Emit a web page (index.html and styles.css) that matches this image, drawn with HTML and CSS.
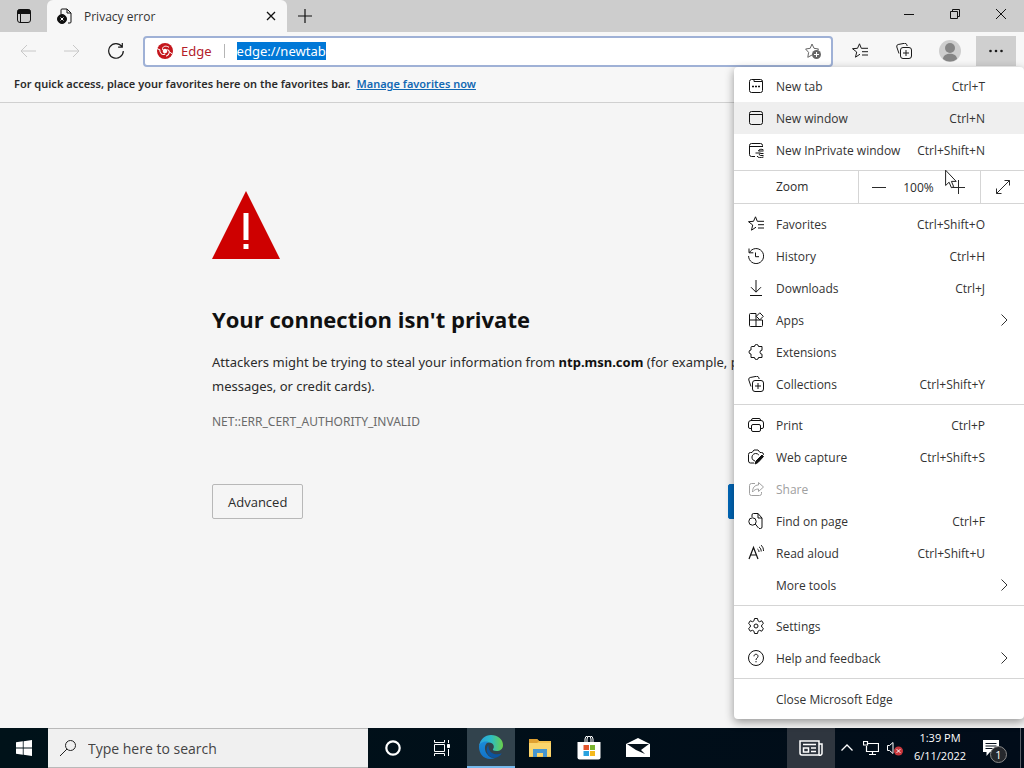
FILE: index.html
```html
<!DOCTYPE html>
<html lang="en">
<head>
    <meta charset="UTF-8">
    <meta name="viewport" content="width=device-width, initial-scale=1.0">
    <title>Privacy error</title>
    <link rel="stylesheet" href="styles.css">
</head>
<body>

    <header class="tab-strip">
        <button class="tab-actions" aria-label="Tab actions">
            <svg class="icon" viewBox="0 0 16 16"><rect x="1.5" y="1.5" width="13" height="13" rx="2.5"/><path class="fill" d="M2 2h12v3.5H2z"/><path d="M4.5 5v9"/></svg>
        </button>
        <div class="tab">
            <svg class="icon" viewBox="0 0 16 16"><path d="M4 6V2a1 1 0 0 1 1-1h5l4 4v9a1 1 0 0 1-1 1h-2M10 1v4h4"/><circle class="fill" cx="5" cy="11" r="4.5"/><path stroke="#fff" d="M3.500 9.500l3 3M6.500 9.500l-3 3"/></svg>
            <span class="tab-title">Privacy error</span>
            <button aria-label="Close tab">
                <svg class="icon" viewBox="0 0 16 16"><path d="M4 4l8 8M12 4l-8 8" stroke-width="1.3"/></svg>
            </button>
        </div>
        <button class="new-tab" aria-label="Open new tab">
            <svg class="icon" viewBox="0 0 16 16"><path d="M8 1v14M1 8h14" stroke-width="1.2"/></svg>
        </button>
        <div class="window-controls">
            <button aria-label="Minimize"><svg viewBox="0 0 10 10"><path d="M0 5.500h10"/></svg></button>
            <button aria-label="Restore"><svg viewBox="0 0 10 10"><path d="M.5 2.500h7v7h-7zM2.500 2.500v-2h7v7h-2"/></svg></button>
            <button aria-label="Close"><svg viewBox="0 0 10 10"><path d="M0 0l10 10M10 0L0 10"/></svg></button>
        </div>
    </header>

    <div class="toolbar">
        <button aria-label="Back" disabled><svg class="icon" viewBox="0 0 16 16"><path d="M16 8H1M7 2L1 8l6 6"/></svg></button>
        <button aria-label="Forward" disabled><svg class="icon" viewBox="0 0 16 16"><path d="M0 8h15M9 2l6 6-6 6"/></svg></button>
        <button aria-label="Refresh"><svg class="icon" viewBox="0 0 16 16"><path d="M13.800 3.500A7.300 7.300 0 1 0 15.300 8M14.300 0v4.200h-4.200" stroke-width="1.2"/></svg></button>
        <div class="address-bar">
            <svg class="icon brand" viewBox="0 0 16 16">
                <circle cx="8" cy="8" r="8"/>
                <path d="M5.500 6.800C5 3.500 8.500 2 12 4.300"/>
                <path d="M5.500 6.800C5 3.500 8.500 2 12 4.300" transform="rotate(120 8 8)"/>
                <path d="M5.500 6.800C5 3.500 8.500 2 12 4.300" transform="rotate(240 8 8)"/>
                <path d="M0 5.500L3 7M15.500 11l-3-2"/>
                <circle class="hole" cx="8" cy="8" r="2.300"/>
            </svg>
            <label for="address">Edge</label>
            <input id="address" type="text" value="edge://newtab" spellcheck="false" autofocus>
            <button aria-label="Add to favorites">
                <svg class="icon star" viewBox="0 0 16 16"><path d="M7 12l-4.200 2.300.8-4.900L.6 6l4.600-.7L7 1l2 4.300 4.600.7-1.200 1.300"/><circle cx="11.500" cy="11.500" r="4.500"/><path stroke="#fff" d="M9 11.500h5M11.500 9v5"/></svg>
            </button>
        </div>
        <button aria-label="Favorites"><svg class="icon" viewBox="0 0 16 16"><path d="M8 11.200l-4.500 3 1.200-5.200L.5 5.700l5-.4L7.500.8l1.800 4.500H16M10 8.700h6M10 12h6"/></svg></button>
        <button aria-label="Collections"><svg class="icon" viewBox="0 0 16 16"><path d="M3 10.500L.8 4a2 2 0 0 1 1.400-2.500L8.500.3a2 2 0 0 1 2.300 1.500l.4 1.200"/><rect x="4.500" y="4.500" width="11" height="11" rx="2.500"/><path d="M10 7v6M7 10h6"/></svg></button>
        <button class="profile" aria-label="Profile"><svg viewBox="0 0 22 22"><circle cx="11" cy="11" r="11" fill="#cecece"/><circle cx="11" cy="8" r="5" fill="#858585"/><path d="M4 19c0-7 14-7 14 0a11 11 0 0 1-14 0z" fill="#858585"/></svg></button>
        <button class="more" aria-label="Settings and more" aria-expanded="true"><svg class="icon dots" viewBox="0 0 16 16"><circle cx="2.500" cy="8" r="1.300"/><circle cx="8" cy="8" r="1.300"/><circle cx="13.500" cy="8" r="1.300"/></svg></button>
    </div>

    <div class="favorites-bar">
        <span>For quick access, place your favorites here on the favorites bar.</span>
        <a href="#">Manage favorites now</a>
    </div>

    <main class="page">
        <div class="interstitial">
            <svg class="warning" viewBox="0 0 68 68"><path d="M34 0l34 68H0z" fill="#ce0000"/><path d="M31.500 22h5v27h-5zM31.500 53h5v5h-5z" fill="#fff"/></svg>
            <h1>Your connection isn't private</h1>
            <p>Attackers might be trying to steal your information from <strong>ntp.msn.com</strong> (for example, passwords, messages, or credit cards).</p>
            <div class="error-code">NET::ERR_CERT_AUTHORITY_INVALID</div>
            <div class="actions">
                <button>Advanced</button>
                <button class="primary">Go back</button>
            </div>
        </div>
    </main>

    <footer class="taskbar">
        <button class="start" aria-label="Start"><svg class="icon" viewBox="0 0 16 16"><path d="M0 2.300L6.800 1.300v6.300H0zM7.600 1.200L16 0v7.600H7.600zM0 8.400h6.800v6.300L0 13.700zM7.600 8.400H16V16l-8.400-1.200z" fill="#fff" stroke="none"/></svg></button>
        <div class="search">
            <svg class="icon" viewBox="0 0 16 16"><circle cx="10.500" cy="5.500" r="5"/><path d="M7 9L0 16"/></svg>
            <input type="text" aria-label="Search" placeholder="Type here to search">
        </div>
        <nav class="apps">
            <button aria-label="Cortana"><svg class="icon" viewBox="0 0 16 16"><circle cx="8" cy="8" r="6.700" stroke-width="2.200"/></svg></button>
            <button aria-label="Task View"><svg class="icon" viewBox="0 0 16 16"><path d="M.5 0v2.500h10V0M.5 16v-2.500h10V16M.5 4.500h10v7H.5zM14.500 0v3M14.500 9v7"/><path class="fill" d="M13.500 4.500h2v3h-2z"/></svg></button>
            <button class="active" aria-label="Microsoft Edge">
                <svg class="app-icon" viewBox="0 0 24 24">
                    <defs>
                        <linearGradient id="edge-top" x1="0" y1="0" x2="1" y2="0"><stop offset="0" stop-color="#2a9fe0"/><stop offset=".5" stop-color="#2cbcc5"/><stop offset="1" stop-color="#6ad04a"/></linearGradient>
                        <linearGradient id="edge-body" x1="0" y1="0" x2="0" y2="1"><stop offset="0" stop-color="#1b8bd8"/><stop offset="1" stop-color="#1272c8"/></linearGradient>
                    </defs>
                    <path d="M0 11C1 4.500 6 0 12 0c7 0 12 4.500 12 10 0 4-3 6-6.500 6-3 0-4-1-3.500-2 2-2 .5-6.500-4-6.500C5.500 7.500 1.500 9 0 11z" fill="url(#edge-top)"/>
                    <path d="M0 12c0-4 5-6.500 9.500-5C5 9 5 15 8 19c2 3 5 4.500 8 4C7 26.500 0 20 0 12z" fill="url(#edge-body)"/>
                    <path d="M9.500 10c-4 4-1.500 12.500 6.500 13 3-.6 5.500-2.500 6.700-4.800-6 3-14-.2-13.200-8.200z" fill="#0c549f"/>
                </svg>
            </button>
            <button aria-label="File Explorer"><svg class="app-icon" viewBox="0 0 24 24"><path d="M1 3h8l2 2h12v16H1z" fill="#f5c14d"/><path d="M1 3h8l2 2-2 2H1z" fill="#e0a030"/><path d="M1 7h22v13H1z" fill="#fbd56d"/><path d="M5 13h14v8h-4v-4H9v4H5z" fill="#4796d0"/></svg></button>
            <button aria-label="Microsoft Store"><svg class="app-icon" viewBox="0 0 24 24"><path d="M8 6V3a3 3 0 0 1 6 0v3M10 6V3a3 3 0 0 1 6 0v3" fill="none" stroke="#fff"/><path d="M.5 6h23v15.500a2 2 0 0 1-2 2h-19a2 2 0 0 1-2-2z" fill="#fff"/><path d="M6.500 9H12v5H6.500z" fill="#e3542b"/><path d="M13 9h5v5h-5z" fill="#7bb42f"/><path d="M6.500 15H12v5H6.500z" fill="#29a2df"/><path d="M13 15h5v5h-5z" fill="#f5b91d"/></svg></button>
            <button aria-label="Mail"><svg class="app-icon" viewBox="0 0 24 24"><path d="M0 8l12-6 12 6v13H0z" fill="#fff"/><path d="M1 8h22l-8 6 4 4-9-4z" fill="#06121c"/></svg></button>
        </nav>
        <div class="tray">
            <button class="news" aria-label="News"><svg viewBox="0 0 24 16"><path d="M1 1h19v14H3a2 2 0 0 1-2-2zM20 4h3v9a2 2 0 0 1-3 2M4 4.500h13M12 8h5M12 11.500h5M4.500 8h5v4h-5z" stroke-width="1.500"/></svg></button>
            <button aria-label="Show hidden icons"><svg class="icon" viewBox="0 0 16 16"><path d="M2.500 10.500L8 5l5.500 5.500" stroke-width="1.300"/></svg></button>
            <button aria-label="Network"><svg class="icon" viewBox="0 0 16 16"><path d="M4 3.500h11.500v8H3.500V6M.5 1.500h4V5h-4zM9.500 11.500v3M6 14.500h7" stroke-width="1.200"/></svg></button>
            <button aria-label="Volume muted"><svg class="icon" viewBox="0 0 16 16"><path d="M.5 5.500h2l3.500-3v11l-3.500-3h-2z"/><circle cx="11.500" cy="11" r="4.500" fill="#c9373c" stroke="none"/><path d="M9.700 9.200l3.600 3.600M13.300 9.200l-3.600 3.600"/></svg></button>
            <button class="clock"><span>1:39 PM</span><span>6/11/2022</span></button>
            <button class="notifications" aria-label="Notifications">
                <svg viewBox="0 0 16 16"><path d="M0 0h16v12H7l-3.500 4v-4H0z" fill="#fff" stroke="none"/><path d="M2.500 3.500h11M2.500 6h11M2.500 8.500h7" stroke="#06101d"/></svg>
                <span class="badge">1</span>
            </button>
            <button class="show-desktop" aria-label="Show desktop"></button>
        </div>
    </footer>

    <nav class="menu">
        <button class="menu-item"><svg class="icon" viewBox="0 0 16 16"><rect x="1.500" y="1.500" width="13" height="13" rx="2"/><path d="M6 1.500v2h8.500"/><path d="M4 8.500h2M7 8.500h2M10 8.500h2" stroke-width="1.500"/></svg><span>New tab</span><kbd>Ctrl+T</kbd></button>
        <button class="menu-item hovered"><svg class="icon" viewBox="0 0 16 16"><rect x="1.500" y="1.500" width="13" height="13" rx="2"/><path d="M1.500 4.500h13"/></svg><span>New window</span><kbd>Ctrl+N</kbd></button>
        <button class="menu-item"><svg class="icon" viewBox="0 0 16 16"><path d="M7 14.500H3.500a2 2 0 0 1-2-2v-9a2 2 0 0 1 2-2h9a2 2 0 0 1 2 2V5M1.500 4.500h13M15.500 8c-2-1.500-5-.5-5 1h5M7.500 11h5M15.500 11.500h-3c-1.500 0-1.500 2 0 2h3M9 14c1 2 4 2 6.500 1"/></svg><span>New InPrivate window</span><kbd>Ctrl+Shift+N</kbd></button>
        <hr>
        <div class="zoom-row">
            <span class="zoom-label">Zoom</span>
            <div class="zoom-controls">
                <button aria-label="Zoom out"><svg class="icon" viewBox="0 0 16 16"><path d="M1 8.500h14"/></svg></button>
                <output>100%</output>
                <button aria-label="Zoom in"><svg class="icon" viewBox="0 0 16 16"><path d="M8.500 1v14M1 8.500h14"/></svg></button>
            </div>
            <button class="fullscreen" aria-label="Full screen"><svg class="icon" viewBox="0 0 16 16"><path d="M1.500 14.500l13-13M9.500 1.500h5v5M1.500 9.500v5h5"/></svg></button>
        </div>
        <hr class="tight">
        <button class="menu-item"><svg class="icon" viewBox="0 0 16 16"><path d="M8 11.200l-4.500 3 1.200-5.200L.5 5.700l5-.4L7.500.8l1.800 4.500H16M10 8.700h6M10 12h6"/></svg><span>Favorites</span><kbd>Ctrl+Shift+O</kbd></button>
        <button class="menu-item"><svg class="icon" viewBox="0 0 16 16"><path d="M1.500 4.500A7.500 7.500 0 1 1 .6 8M1 .5v4.300h4.300M7.500 4.500v4.200h3.500"/></svg><span>History</span><kbd>Ctrl+H</kbd></button>
        <button class="menu-item"><svg class="icon" viewBox="0 0 16 16"><path d="M8 0v12M3 7.200l5 5 5-5M2 15.500h12"/></svg><span>Downloads</span><kbd>Ctrl+J</kbd></button>
        <button class="menu-item"><svg class="icon" viewBox="0 0 16 16"><path d="M8 1.500H2.500a1 1 0 0 0-1 1v11a1 1 0 0 0 1 1h11a1 1 0 0 0 1-1V8M1.500 8h13M8 1.500v13M11.800.8L15.300 4.300l-3.500 3.500-3.500-3.500z"/></svg><span>Apps</span><span class="chevron"><svg viewBox="0 0 7 12"><path d="M.5.500L6 6l-5.500 5.500"/></svg></span></button>
        <button class="menu-item"><svg class="icon" viewBox="0 0 16 16"><path d="M4 2.500h2.500a2 2 0 0 1 4 0H14v3.700a2 2 0 0 0 0 4v3.300h-3.500a2 2 0 0 1-4 0H3V10a2 2 0 0 1 0-4V3.500a1 1 0 0 1 1-1z"/></svg><span>Extensions</span></button>
        <button class="menu-item"><svg class="icon" viewBox="0 0 16 16"><path d="M3 10.500L.8 4a2 2 0 0 1 1.400-2.500L8.500.3a2 2 0 0 1 2.300 1.500l.4 1.200"/><rect x="4.500" y="4.500" width="11" height="11" rx="2.500"/><path d="M10 7v6M7 10h6"/></svg><span>Collections</span><kbd>Ctrl+Shift+Y</kbd></button>
        <hr>
        <button class="menu-item"><svg class="icon" viewBox="0 0 16 16"><path d="M3.500 11.500H2a1.500 1.500 0 0 1-1.500-1.500V6A2.500 2.500 0 0 1 3 3.500h10A2.500 2.500 0 0 1 15.500 6v4a1.500 1.500 0 0 1-1.500 1.500h-1.500M3.500 3.500V3A1.500 1.500 0 0 1 5 1.500h6A1.500 1.500 0 0 1 12.500 3v.5"/><rect x="3.500" y="7.500" width="9" height="7" rx="1.500"/></svg><span>Print</span><kbd>Ctrl+P</kbd></button>
        <button class="menu-item"><svg class="icon" viewBox="0 0 16 16"><path d="M6 14H2.500a2 2 0 0 1-2-2V5.500a2 2 0 0 1 2-2H4L6 1h4l2 2.500h1.500a2 2 0 0 1 2 2V6M10.800 6A3.800 3.800 0 1 0 7 12"/><path class="fill" d="M14 6l1.500 1.500-5.500 6-3 1.500 1-3z"/></svg><span>Web capture</span><kbd>Ctrl+Shift+S</kbd></button>
        <button class="menu-item" disabled><svg class="icon" viewBox="0 0 16 16"><path d="M7 2.500H3.500a2 2 0 0 0-2 2v8a2 2 0 0 0 2 2h8a2 2 0 0 0 2-2V11M10.500 1.500l5 4.500-5 4.500V8C8 8 6 9 4.500 11c0-4 2-7 6-7z"/></svg><span>Share</span></button>
        <button class="menu-item"><svg class="icon" viewBox="0 0 16 16"><path d="M4 4V2a1.500 1.500 0 0 1 1.500-1.500H10L14 5v9a1.500 1.500 0 0 1-1.500 1.500H11M10 .5V5h4M7.300 11L10.500 15"/><circle cx="4.500" cy="8.500" r="3.700"/></svg><span>Find on page</span><kbd>Ctrl+F</kbd></button>
        <button class="menu-item"><svg class="icon" viewBox="0 0 16 16"><path d="M1 14L5.500 2.500 10 14M2.500 10h6" stroke-width="1.200"/><path d="M9.500 4c1 .7 1.500 1.500 1.500 3M11 1.800c1.500 1.200 2.200 2.700 2.200 4.700M12.800 0c2 1.500 2.700 3.500 2.700 6"/></svg><span>Read aloud</span><kbd>Ctrl+Shift+U</kbd></button>
        <button class="menu-item"><span class="icon"></span><span>More tools</span><span class="chevron"><svg viewBox="0 0 7 12"><path d="M.5.500L6 6l-5.500 5.500"/></svg></span></button>
        <hr>
        <button class="menu-item"><svg class="icon" viewBox="0 0 16 16"><path d="M6.500.5h3l.5 2.300 1.500.9 2.300-.9 1.600 2.700L13.700 7v2l1.700 1.500-1.600 2.700-2.300-.9-1.500.9-.5 2.300h-3L6 13.200l-1.500-.9-2.300.9-1.600-2.700L2.300 9V7L.6 5.500l1.600-2.700 2.300.9L6 2.800z" stroke-linejoin="round"/><circle cx="8" cy="8" r="2"/></svg><span>Settings</span></button>
        <button class="menu-item"><svg class="icon" viewBox="0 0 16 16"><circle cx="8" cy="8" r="7.500"/><path d="M6 6.300c0-2.800 4-2.600 4 0C10 8 8 8 8 10M8 11v1.300"/></svg><span>Help and feedback</span><span class="chevron"><svg viewBox="0 0 7 12"><path d="M.5.500L6 6l-5.500 5.500"/></svg></span></button>
        <hr>
        <button class="menu-item"><span class="icon"></span><span>Close Microsoft Edge</span></button>

        <svg class="cursor" viewBox="0 0 12 20"><path d="M.6 1.200v15.300l3.500-3.300 2.300 5.500 2.300-1-2.300-5.300h4.800z" fill="#fff" stroke="#222"/></svg>
    </nav>

    <script>
        document.getElementById('address').select();
    </script>

</body>
</html>
```

FILE: styles.css
```css
* {
    box-sizing: border-box;
}
body {
    font-family: 'Open Sans', 'Noto Sans', sans-serif;
    font-size: 12px;
    color: #2b2b2b;
    background-color: #f5f5f5;
    margin: 0;
    min-height: 100vh;
    display: flex;
    flex-direction: column;
    position: relative;
    overflow: hidden;
}
button, input {
    font: inherit;
    color: inherit;
    background: none;
    border: none;
    padding: 0;
    margin: 0;
}
button {
    display: flex;
    align-items: center;
    justify-content: center;
}
svg {
    fill: none;
    stroke: currentColor;
    display: block;
    flex-shrink: 0;
}
.icon {
    width: 16px;
    height: 16px;
}
.fill {
    fill: currentColor;
}

/* Tabs */
.tab-strip {
    display: flex;
    height: 32px;
    background-color: #cdcdcd;
    color: #111;
}
.tab-actions {
    width: 47px;
}
.tab {
    display: flex;
    align-items: center;
    width: 240px;
    padding: 0 8px 0 10px;
    background-color: #f7f7f7;
    border-radius: 6px 6px 0 0;
}
.tab-title {
    flex: 1;
    margin-left: 11px;
    color: #333;
}
.new-tab {
    width: 36px;
}
.window-controls {
    display: flex;
    margin-left: auto;
    height: 28px;
}
.window-controls button {
    width: 46px;
}
.window-controls svg {
    width: 10px;
    height: 10px;
}

/* Toolbar */
.toolbar {
    display: flex;
    align-items: center;
    gap: 4px;
    height: 36px;
    padding: 2px 8px 0;
    background-color: #f7f7f7;
}
.toolbar > button {
    width: 40px;
    height: 30px;
    color: #1a1a1a;
}
.toolbar > button:disabled {
    color: #c8c8c8;
}
.toolbar > .profile {
    width: 44px;
}
.profile svg {
    width: 22px;
    height: 22px;
    stroke: none;
}
.toolbar > .more {
    background-color: #cfcfcf;
}
.dots {
    fill: currentColor;
    stroke: none;
}
.address-bar {
    flex: 1;
    display: flex;
    align-items: center;
    height: 31px;
    margin: 0 3px;
    padding: 0 10px 0 12px;
    background-color: white;
    border: 2px solid #9fb1d6;
    border-radius: 4px;
    font-family: 'Noto Sans', 'Open Sans', sans-serif;
    font-size: 13px;
}
.address-bar label {
    color: #b3202a;
    margin-left: 8px;
    padding-right: 12px;
    line-height: 14px;
    border-right: 1px solid #b5b5b5;
}
.address-bar input {
    flex: 1;
    height: 22px;
    margin-left: 12px;
    outline: none;
}
.address-bar input::selection {
    background-color: #0078d7;
    color: white;
}
.brand {
    fill: #c4161c;
    stroke: white;
}
.brand circle {
    stroke: none;
}
.brand path {
    fill: none;
}
.brand .hole {
    fill: white;
}
.star {
    color: #666;
}
.star circle {
    fill: #666;
    stroke: none;
}

/* Favorites bar */
.favorites-bar {
    display: flex;
    align-items: center;
    gap: 6px;
    height: 35px;
    padding: 0 14px 3px;
    background-color: #f7f7f7;
    border-bottom: 1px solid #d0d0d0;
    font-family: 'Noto Sans', 'Open Sans', sans-serif;
    font-size: 11px;
    font-weight: 600;
}
.favorites-bar a {
    color: #1268b3;
}

/* Error page */
.page {
    flex: 1;
    padding-top: 88px;
}
.interstitial {
    max-width: 600px;
    margin: 0 auto;
}
.warning {
    width: 68px;
    height: 68px;
    stroke: none;
}
h1 {
    margin: 44px 0 15px;
    font-size: 22px;
    line-height: 32px;
    font-weight: bold;
    color: #101010;
}
p {
    margin: 0 0 14px;
    font-family: 'Noto Sans', 'Open Sans', sans-serif;
    font-size: 13px;
    line-height: 24px;
}
strong {
    color: #101010;
}
.error-code {
    font-family: 'Noto Sans', 'Open Sans', sans-serif;
    font-size: 12px;
    line-height: 20px;
    color: #6a6a6a;
}
.actions {
    display: flex;
    justify-content: space-between;
    margin-top: 52px;
}
.actions button {
    height: 35px;
    padding: 0 15px;
    border: 1px solid #b8b8b8;
    border-radius: 2px;
    font-size: 13px;
}
.actions .primary {
    min-width: 84px;
    background-color: #0067b8;
    border-color: #0067b8;
    color: white;
}

/* Menu */
.menu {
    position: absolute;
    top: 67px;
    right: 0;
    width: 290px;
    padding: 3px 0 4px;
    background-color: white;
    border-radius: 4px;
    box-shadow: 0 3px 10px rgba(0, 0, 0, 0.4);
}
.menu-item {
    width: 100%;
    height: 32px;
    padding: 0 39px 0 14px;
    justify-content: flex-start;
    gap: 12px;
    color: #333;
}
.menu-item .icon {
    color: #111;
}
.menu-item kbd {
    font: inherit;
    margin-left: auto;
}
.menu-item:disabled, .menu-item:disabled .icon {
    color: #a0a0a0;
}
.hovered {
    background-color: #efefef;
}
.chevron {
    margin-left: auto;
    margin-right: -23px;
}
.chevron svg {
    width: 7px;
    height: 12px;
}
.menu hr {
    margin: 4px 0;
    border: none;
    border-top: 1px solid #d5d5d5;
}
.zoom-row {
    display: flex;
    height: 32px;
    margin-top: -4px;
}
.zoom-label {
    flex: 1;
    padding-left: 42px;
    line-height: 32px;
}
.zoom-controls {
    display: flex;
    align-items: center;
    justify-content: space-between;
    width: 123px;
    padding: 0 14px 0 12px;
    border: 1px solid #d5d5d5;
    border-width: 0 1px;
}
.fullscreen {
    width: 43px;
}
.menu .tight {
    margin-top: 0;
}
.cursor {
    position: absolute;
    top: 102px;
    left: 211px;
    width: 12px;
    height: 20px;
}

/* Taskbar */
.taskbar {
    display: flex;
    height: 40px;
    background: linear-gradient(to right, #001219, #010c19);
    color: white;
}
.start {
    width: 48px;
}
.search {
    display: flex;
    align-items: center;
    width: 320px;
    padding: 0 12px;
    gap: 12px;
    background-color: #f0f0f0;
    border: 1px solid #b9b9b9;
    border-width: 1px 0;
    color: #222;
    font-size: 14px;
}
.search input {
    flex: 1;
    min-width: 0;
}
.search input::placeholder {
    color: #444;
}
.apps {
    display: flex;
    gap: 1px;
    padding-left: 1px;
}
.apps button {
    width: 48px;
}
.apps .active {
    background-color: #32434d;
    border-bottom: 2px solid #76b9ed;
}
.app-icon {
    width: 24px;
    height: 24px;
    stroke: none;
}
.tray {
    display: flex;
    margin-left: auto;
}
.tray button {
    width: 24px;
}
.tray .news {
    width: 48px;
    background-color: #2f363f;
}
.news svg {
    width: 24px;
    height: 16px;
}
.tray .clock {
    width: 66px;
    padding-bottom: 2px;
    flex-direction: column;
    font-size: 11px;
    line-height: 18px;
}
.tray .notifications {
    position: relative;
    width: 47px;
    padding-right: 12px;
}
.notifications svg {
    width: 16px;
    height: 16px;
}
.badge {
    position: absolute;
    left: 17px;
    top: 18px;
    width: 17px;
    height: 17px;
    line-height: 15px;
    border: 1px solid #8a8a8a;
    border-radius: 50%;
    background-color: #25282d;
    font-size: 11px;
    text-align: center;
}
.tray .show-desktop {
    width: 4px;
    border-left: 1px solid #5a6068;
}
```
